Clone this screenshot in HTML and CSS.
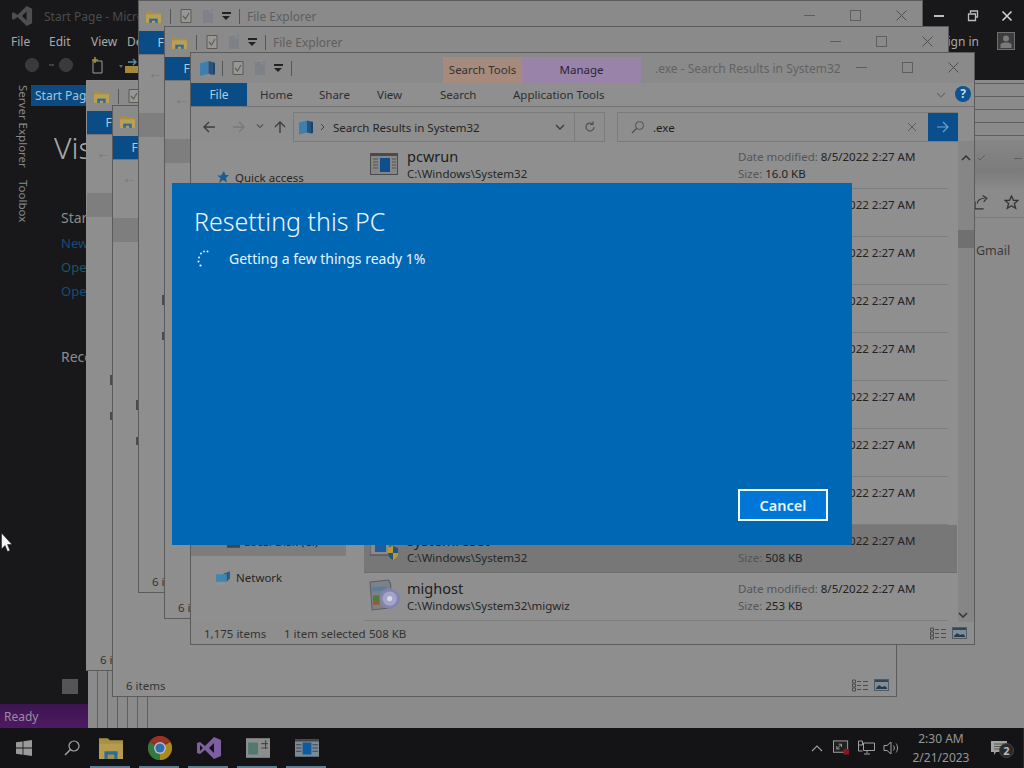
FILE: index.html
```html
<!DOCTYPE html>
<html lang="en">
<head>
<meta charset="utf-8">
<title>Resetting this PC</title>
<link rel="stylesheet" href="styles.css">
</head>
<body>
<svg class="defs" aria-hidden="true">
  <symbol id="i-folder" viewBox="0 0 16 16"><path d="M1 3h5l1 1.500h8V14H1z" fill="#a98f45"/><path d="M1 6h14v8H1z" fill="#b9a055"/><path d="M4 10h8v4H4z" fill="#2f6a99"/><path d="M6.500 12h3v2h-3z" fill="#b9a055"/></symbol>
  <symbol id="i-check" viewBox="0 0 16 16"><path d="M3 1.500h10v13H3z" fill="#979797" stroke="#5a5a5a"/><path d="M5 8l2.500 3L11 5" fill="none" stroke="#6b5a48" stroke-width="1.200"/></symbol>
  <symbol id="i-doc" viewBox="0 0 16 16"><path d="M3 1h10v14H3z" fill="#7e8288"/><path d="M3 1h7v3h3" fill="none" stroke="#8c9096"/></symbol>
  <symbol id="i-cube" viewBox="0 0 16 16"><path d="M1 3l8-2v12l-8 2z" fill="#3e7fb0"/><path d="M9 1l4 1v12l-4-1z" fill="#24537e"/><path d="M13 2l2 .5v11l-2 .5z" fill="#1a4368"/></symbol>
  <symbol id="i-app" viewBox="0 0 28 22"><rect x=".500" y=".500" width="27" height="21" fill="#868686" stroke="#4a4a4a"/><rect x="0" y="0" width="28" height="3" fill="#4a4a4a"/><rect x="10" y="5" width="10" height="14" fill="#0d4f8c"/><path d="M3 6h5M3 9h5M3 12h5M3 15h5M22 6h4M22 9h4M22 12h4M22 15h4" stroke="#555"/></symbol>
  <symbol id="i-views" viewBox="0 0 16 13"><path d="M.500 1h3v3h-3zM.500 5h3v3h-3zM.500 9h3v3h-3z" fill="none" stroke="#4c4c4c"/><path d="M5 2.500h4M11 2.500h5M5 6.500h4M11 6.500h5M5 10.500h4M11 10.500h5" stroke="#4c4c4c"/></symbol>
  <symbol id="i-pane" viewBox="0 0 15 12"><rect x=".500" y=".500" width="14" height="11" fill="#7f8e98" stroke="#4c5c68"/><rect x="1" y="1" width="13" height="2" fill="#345"/><path d="M2 9l3-3 3 2 3-1 2 2v1H2z" fill="#2a3a44"/></symbol>
</svg>

<main class="desktop">
  <section class="vs">
    <header class="vs-title">
      <svg class="vs-logo" viewBox="0 0 24 24"><path d="M17 1l6 3v16l-6 3L7 13l-4 3-2-1V9l2-1 4 3zM17 7l-5 5 5 5z" fill="#4e4e50" fill-rule="evenodd"/></svg>
      <span class="vs-name">Start Page - Microsoft Visual Studio</span>
      <span class="vs-controls">
        <svg viewBox="0 0 12 12"><path d="M1 6h10" stroke="#bdbdbd" stroke-width="2"/></svg>
        <svg viewBox="0 0 12 12"><path d="M3.500 3V1h7v6h-2M1.500 4h7v6.500h-7z" fill="none" stroke="#bdbdbd" stroke-width="1.300"/></svg>
        <svg viewBox="0 0 12 12"><path d="M1.500 1.500l9 9M10.500 1.500l-9 9" stroke="#d0d0d0" stroke-width="1.600"/></svg>
      </span>
    </header>
    <nav class="vs-menu">
      <span>File</span><span>Edit</span><span>View</span><span>Debug</span>
      <span class="vs-signin">Sign in</span>
      <svg class="vs-avatar" viewBox="0 0 18 18"><rect x=".500" y=".500" width="17" height="17" fill="#3c3c3c" stroke="#6e6e6e"/><circle cx="9" cy="6.500" r="3" fill="#7a7a7a"/><path d="M3.500 16v-4l3-1.500h5l3 1.500v4z" fill="#7a7a7a"/></svg>
    </nav>
    <div class="vs-tools">
      <svg class="vs-tool" viewBox="0 0 100 18">
        <circle cx="9" cy="9" r="6.500" fill="#3a3a3c" stroke="#3f3f40"/><path d="M26 9h5" stroke="#3f3f40" stroke-width="2"/><circle cx="43" cy="9" r="6.500" fill="#3a3a3c" stroke="#3f3f40"/>
        <path d="M70 5h9v12h-9z" fill="none" stroke="#9a9a9a"/><path d="M72 1v6M69 4h6" stroke="#a88f3c" stroke-width="1.500"/>
        <path d="M96 9h4l-2 3z" fill="#666"/>
      </svg>
      <svg class="vs-tool-two" viewBox="0 0 14 18"><path d="M0 10h14v7H0z" fill="#a5893a"/><path d="M3 6h8M8 3l3 3-3 3" fill="none" stroke="#5f8fa5" stroke-width="1.400"/></svg>
    </div>
    <div class="vs-body">
      <aside class="vs-rail">
        <span>Server Explorer</span>
        <span>Toolbox</span>
      </aside>
      <div class="vs-page">
        <div class="vs-tab">Start Page</div>
        <h1 class="vs-h1">Visual Studio</h1>
        <h2 class="vs-h2">Start</h2>
        <a class="vs-link">New Project...</a>
        <a class="vs-link vs-link-teal">Open Project...</a>
        <a class="vs-link">Open from Source Control...</a>
        <h2 class="vs-h2 vs-recent">Recent</h2>
      </div>
    </div>
    <span class="vs-square"></span>
    <footer class="vs-status">Ready</footer>
  </section>

  <section class="browser">
    <div class="stripes"></div>
    <div class="browser-side">
      <div class="browser-rules"><i></i><i></i><i></i><i></i><i></i></div>
      <div class="browser-head">
        <span class="browser-check">
          <svg viewBox="0 0 10 8"><path d="M1 4l2 2 5-5" fill="none" stroke="#5f5f5f"/></svg>
          <i></i>
        </span>
      </div>
      <div class="browser-actions">
        <svg viewBox="0 0 14 14"><path d="M1 6v7h8M3 8c0-3 3-5 7-5M8 .500l4 2.500-3 3.500" fill="none" stroke="#333" stroke-width="1.100"/></svg>
        <svg viewBox="0 0 14 14"><path d="M7 1l1.800 4H13L9.700 8l1.200 4.500L7 10l-3.900 2.500L4.300 8 1 5h4.200z" fill="none" stroke="#333" stroke-width="1.200"/></svg>
      </div>
      <div class="browser-gmail">Gmail</div>
    </div>
  </section>

  <article class="win win-1">
    <header class="win-title">
      <svg class="qa-main"><use href="#i-folder"/></svg><i class="qa-sep"></i>
      <svg class="qa-icon"><use href="#i-check"/></svg><svg class="qa-icon"><use href="#i-doc"/></svg>
      <span class="qa-more"></span><i class="qa-sep"></i>
      <span class="win-name">File Explorer</span>
    </header>
    <div class="win-tabs"><span class="tab-file">File</span></div>
    <div class="win-nav"><span class="nav-back">←</span></div>
    <div class="win-band"></div>
    <i class="tick tick-a"></i><i class="tick tick-b"></i>
    <footer class="win-status"><span>6 items</span></footer>
  </article>

  <article class="win win-2">
    <header class="win-title">
      <svg class="qa-main"><use href="#i-folder"/></svg><i class="qa-sep"></i>
      <svg class="qa-icon"><use href="#i-check"/></svg><svg class="qa-icon"><use href="#i-doc"/></svg>
      <span class="qa-more"></span><i class="qa-sep"></i>
      <span class="win-name">File Explorer</span>
    </header>
    <div class="win-tabs"><span class="tab-file">File</span></div>
    <div class="win-nav"><span class="nav-back">←</span></div>
    <div class="win-band"></div>
    <i class="tick tick-a"></i><i class="tick tick-b"></i>
    <footer class="win-status"><span>6 items</span><span class="view-btns"><svg class="view-a"><use href="#i-views"/></svg><svg class="view-b"><use href="#i-pane"/></svg></span></footer>
  </article>

  <article class="win win-3">
    <header class="win-title">
      <svg class="qa-main"><use href="#i-folder"/></svg><i class="qa-sep"></i>
      <svg class="qa-icon"><use href="#i-check"/></svg><svg class="qa-icon"><use href="#i-doc"/></svg>
      <span class="qa-more"></span><i class="qa-sep"></i>
      <span class="win-name">File Explorer</span>
      <span class="win-controls"><i class="ctl-min"></i><i class="ctl-max"></i><svg class="ctl-close" viewBox="0 0 11 11"><path d="M.500.500l10 10M10.500.500l-10 10" stroke="#4e4e4e"/></svg></span>
    </header>
    <div class="win-tabs"><span class="tab-file">File</span></div>
    <div class="win-nav"><span class="nav-back">←</span></div>
    <div class="win-band"></div>
    <i class="tick tick-a"></i><i class="tick tick-b"></i>
    <footer class="win-status"><span>6 items</span></footer>
  </article>

  <article class="win win-4">
    <header class="win-title">
      <svg class="qa-main"><use href="#i-folder"/></svg><i class="qa-sep"></i>
      <svg class="qa-icon"><use href="#i-check"/></svg><svg class="qa-icon"><use href="#i-doc"/></svg>
      <span class="qa-more"></span><i class="qa-sep"></i>
      <span class="win-name">File Explorer</span>
      <span class="win-controls"><i class="ctl-min"></i><i class="ctl-max"></i><svg class="ctl-close" viewBox="0 0 11 11"><path d="M.500.500l10 10M10.500.500l-10 10" stroke="#4e4e4e"/></svg></span>
    </header>
    <div class="win-tabs"><span class="tab-file">File</span></div>
    <div class="win-nav"><span class="nav-back">←</span></div>
    <div class="win-band"></div>
    <footer class="win-status"><span>6 items</span></footer>
  </article>

  <article class="win win-5">
    <header class="win-title win-title-search">
      <svg class="qa-main"><use href="#i-cube"/></svg><i class="qa-sep"></i>
      <svg class="qa-icon"><use href="#i-check"/></svg><svg class="qa-icon"><use href="#i-doc"/></svg>
      <span class="qa-more"></span><i class="qa-sep"></i>
      <span class="ctx ctx-search">Search Tools</span>
      <span class="ctx ctx-manage">Manage</span>
      <span class="win-name win-name-search">.exe - Search Results in System32</span>
      <span class="win-controls"><i class="ctl-min"></i><i class="ctl-max"></i><svg class="ctl-close" viewBox="0 0 11 11"><path d="M.500.500l10 10M10.500.500l-10 10" stroke="#4e4e4e"/></svg></span>
    </header>
    <div class="win-tabs win-tabs-search">
      <span class="tab-file">File</span>
      <span class="tab tab-home">Home</span>
      <span class="tab tab-share">Share</span>
      <span class="tab tab-view">View</span>
      <span class="tab tab-search">Search</span>
      <span class="tab tab-apps">Application Tools</span>
      <svg class="ribbon-chev" viewBox="0 0 10 6"><path d="M1 1l4 4 4-4" fill="none" stroke="#6c6c6c" stroke-width="1.200"/></svg>
      <span class="help">?</span>
    </div>
    <div class="win-nav win-nav-search">
      <svg class="nav-arrow" viewBox="0 0 14 14"><path d="M13 7H2M7 2L2 7l5 5" fill="none" stroke="#3d3d3d" stroke-width="1.400"/></svg>
      <svg class="nav-arrow nav-forward" viewBox="0 0 14 14"><path d="M1 7h11M7 2l5 5-5 5" fill="none" stroke="#747474" stroke-width="1.400"/></svg>
      <svg class="nav-drop" viewBox="0 0 8 5"><path d="M1 .500l3 3 3-3" fill="none" stroke="#555" stroke-width="1.200"/></svg>
      <svg class="nav-arrow nav-up" viewBox="0 0 14 14"><path d="M7 13V2M2 7l5-5 5 5" fill="none" stroke="#3d3d3d" stroke-width="1.400"/></svg>
      <div class="addr">
        <svg class="addr-icon"><use href="#i-cube"/></svg>
        <svg class="addr-sep" viewBox="0 0 5 8"><path d="M1 1l3 3-3 3" fill="none" stroke="#444"/></svg>
        <span class="addr-text">Search Results in System32</span>
        <svg class="addr-drop" viewBox="0 0 10 6"><path d="M1 1l4 4 4-4" fill="none" stroke="#3c3c3c" stroke-width="1.400"/></svg>
        <span class="addr-refresh"><svg viewBox="0 0 12 12"><path d="M10 6a4 4 0 1 1-1.500-3.100M9 .500V3.500H6" fill="none" stroke="#505050" stroke-width="1.200"/></svg></span>
      </div>
      <div class="find">
        <svg class="find-icon" viewBox="0 0 14 14"><circle cx="8.500" cy="5.500" r="4" fill="none" stroke="#4e4e4e"/><path d="M5.500 8.500L1 13" stroke="#4e4e4e" stroke-width="1.200"/></svg>
        <span class="find-text">.exe</span>
        <svg class="find-clear" viewBox="0 0 10 10"><path d="M1 1l8 8M9 1L1 9" stroke="#5e5e5e"/></svg>
        <span class="find-go"><svg viewBox="0 0 14 14"><path d="M1 7h11M7 2l5 5-5 5" fill="none" stroke="#6ca3cf" stroke-width="1.200"/></svg></span>
      </div>
    </div>
    <div class="win-body">
      <aside class="pane">
        <div class="pane-item pane-quick">
          <svg class="pane-icon" viewBox="0 0 14 14"><path d="M8 1l1.500 4H13l-3 3 1 4.500L7 10l-4 3 1.500-5L1 5.500h4z" fill="#1d5c8e"/></svg>
          <span>Quick access</span>
        </div>
        <div class="pane-item pane-disk">
          <svg class="pane-disk-icon" viewBox="0 0 14 6"><path d="M0 0h14v6H0z" fill="#444"/><path d="M1 1h5v1.500H1z" fill="#3c7a3c"/></svg>
          <span>Local Disk (C:)</span>
        </div>
        <div class="pane-item pane-net">
          <svg class="pane-icon-net" viewBox="0 0 16 16"><path d="M1 5h10v7H1z" fill="#3e87b3"/><path d="M7 5l7-3v7l-3 3V5z" fill="#215e8a"/><path d="M3 14h6" stroke="#8d9ba6"/></svg>
          <span>Network</span>
        </div>
      </aside>
      <div class="results">
        <div class="row">
          <svg class="row-app"><use href="#i-app"/></svg>
          <div class="row-main"><b>pcwrun</b><span>C:\Windows\System32</span></div>
          <div class="row-meta"><p><em>Date modified:</em> 8/5/2022 2:27 AM</p><p><em>Size:</em> 16.0 KB</p></div>
        </div>
        <div class="row"><div class="row-meta row-meta-solo"><p><em>Date modified:</em> 8/5/2022 2:27 AM</p></div></div>
        <div class="row"><div class="row-meta row-meta-solo"><p><em>Date modified:</em> 8/5/2022 2:27 AM</p></div></div>
        <div class="row"><div class="row-meta row-meta-solo"><p><em>Date modified:</em> 8/5/2022 2:27 AM</p></div></div>
        <div class="row"><div class="row-meta row-meta-solo"><p><em>Date modified:</em> 8/5/2022 2:27 AM</p></div></div>
        <div class="row"><div class="row-meta row-meta-solo"><p><em>Date modified:</em> 8/5/2022 2:27 AM</p></div></div>
        <div class="row"><div class="row-meta row-meta-solo"><p><em>Date modified:</em> 8/5/2022 2:27 AM</p></div></div>
        <div class="row"><div class="row-meta row-meta-solo"><p><em>Date modified:</em> 8/5/2022 2:27 AM</p></div></div>
        <div class="row row-selected">
          <svg class="row-shield" viewBox="0 0 30 22"><path d="M0 0h20v16H0z" fill="#8a8a8a" stroke="#4a4a4a"/><path d="M5 3h11v10H5z" fill="#1c5f9b"/><path d="M18 9l5-2 5 2v6c0 3-3 5-5 6-2-1-5-3-5-6z" fill="#b69a32"/><path d="M23 7l5 2v5h-5zM18 14h5v7c-2-1-5-3-5-7z" fill="#27527f"/></svg>
          <div class="row-main"><b>systemreset</b><span>C:\Windows\System32</span></div>
          <div class="row-meta"><p><em>Date modified:</em> 8/5/2022 2:27 AM</p><p><em>Size:</em> 508 KB</p></div>
        </div>
        <div class="row">
          <svg class="row-cd" viewBox="0 0 32 32"><path d="M2 3l18-2 2 4v23L4 30z" fill="#7c8288" stroke="#5a5e62"/><path d="M4 8l14-1v4l-14 1z" fill="#5c7d9a"/><path d="M5 16h7v6H5z" fill="#4f7a3a"/><path d="M5 22h6v3H5z" fill="#9a5a2e"/><circle cx="21" cy="19" r="10" fill="#8284ad"/><circle cx="21" cy="19" r="7" fill="#a3a5c6"/><circle cx="21" cy="19" r="2.500" fill="#d8d8e4"/></svg>
          <div class="row-main"><b>mighost</b><span>C:\Windows\System32\migwiz</span></div>
          <div class="row-meta"><p><em>Date modified:</em> 8/5/2022 2:27 AM</p><p><em>Size:</em> 253 KB</p></div>
        </div>
      </div>
      <div class="scroll">
        <svg viewBox="0 0 10 6"><path d="M1 5l4-4 4 4" fill="none" stroke="#333" stroke-width="1.500"/></svg>
        <span class="scroll-thumb"></span>
        <svg class="scroll-down" viewBox="0 0 10 6"><path d="M1 1l4 4 4-4" fill="none" stroke="#333" stroke-width="1.500"/></svg>
      </div>
    </div>
    <footer class="win-status win-status-search">
      <span class="st-count">1,175 items</span><span class="st-sel">1 item selected</span><span class="st-size">508 KB</span>
      <span class="view-btns"><svg class="view-a"><use href="#i-views"/></svg><svg class="view-b"><use href="#i-pane"/></svg></span>
    </footer>
  </article>

  <section class="reset" role="dialog">
    <h1 class="reset-title">Resetting this PC</h1>
    <div class="reset-progress">
      <svg class="spinner" viewBox="0 0 14 18"><g fill="#e3f3ff"><circle cx="10.500" cy="1.500" r="1"/><circle cx="7" cy="1.500" r=".9"/><circle cx="4" cy="3.500" r="1"/><circle cx="2" cy="7.500" r="1"/><circle cx="1.500" cy="11.500" r="1"/><circle cx="3.500" cy="15.500" r="1.100"/></g></svg>
      <span>Getting a few things ready 1%</span>
    </div>
    <button class="reset-cancel" type="button">Cancel</button>
  </section>

  <svg class="cursor" viewBox="0 0 12 19"><path d="M.500 0v16l3.500-3.500 2.500 6 2.500-1-2.500-6H11z" fill="#f4f4f4" stroke="#111" stroke-width=".5"/></svg>
</main>

<footer class="taskbar">
  <svg class="start" viewBox="0 0 16 16"><path d="M0 2.300l6.600-.9v6.200H0zM7.400 1.300L16 0v7.600H7.400zM0 8.400h6.600v6.300L0 13.700zM7.400 8.400H16V16l-8.600-1.200z" fill="#9a9a9a"/></svg>
  <svg class="find-task" viewBox="0 0 16 16"><circle cx="10" cy="6" r="5" fill="none" stroke="#a5a5a5" stroke-width="1.200"/><path d="M6.500 9.500L1 15" stroke="#a5a5a5" stroke-width="1.400"/></svg>
  <div class="apps">
    <span class="app"><svg viewBox="0 0 22 20"><path d="M0 1h8l2 2h12v17H0z" fill="#a8903f"/><path d="M0 6h22v14H0z" fill="#b59c4f"/><path d="M5 13h12v7H5z" fill="#2c6b9b"/><path d="M8 16h6v4H8z" fill="#a8903f"/></svg></span>
    <span class="app"><svg viewBox="0 0 24 24"><circle cx="12" cy="12" r="12" fill="#8b2e25"/><path d="M12 12L22.400 6A12 12 0 0 1 12 24z" fill="#a88a1e"/><path d="M12 12L12 24A12 12 0 0 1 1.600 6z" fill="#2f7a3c"/><path d="M1.600 6A12 12 0 0 1 22.400 6H12z" fill="#9c3227"/><circle cx="12" cy="12" r="6" fill="#bcbcbc"/><circle cx="12" cy="12" r="4.500" fill="#2f6db5"/></svg></span>
    <span class="app"><svg viewBox="0 0 24 24"><path d="M17 1l7 3v16l-7 3L8 14l-5 4-3-1V7l3-1 5 4zM17 7l-5 5 5 5zM3 9v6l3-3z" fill="#7e5f9f" fill-rule="evenodd"/></svg></span>
    <span class="app"><svg viewBox="0 0 22 18"><rect width="22" height="18" fill="#8d8d8d"/><rect x="2" y="4" width="9" height="11" fill="#4e7a70"/><path d="M14 5h6M14 9h6M18 2v8" stroke="#444"/></svg></span>
    <span class="app"><svg viewBox="0 0 22 16"><rect width="22" height="16" fill="#7c8a94"/><rect y="0" width="22" height="2" fill="#444"/><rect x="7" y="3" width="8" height="11" fill="#0d5aa0"/><path d="M1 5h5M1 8h5M1 11h5M16 5h5M16 8h5M16 11h5" stroke="#445"/></svg></span>
  </div>
  <div class="tray">
    <svg class="tray-chev" viewBox="0 0 12 7"><path d="M1 6l5-5 5 5" fill="none" stroke="#a0a0a0" stroke-width="1.100"/></svg>
    <svg class="tray-icon" viewBox="0 0 18 16"><rect x=".500" y=".500" width="15" height="12" fill="#222" stroke="#a5a5a5"/><path d="M4 9l5-5M6 4h3v3M4 6v3h3" fill="none" stroke="#999"/><rect x="11" y="9" width="6" height="6" fill="#8c1520"/></svg>
    <svg class="tray-icon" viewBox="0 0 17 15"><path d="M5.500 2.500h11V10h-11zM.500.500h4v4h-4zM.500 4.500v6h4M9 10v3M6 13.500h6" fill="none" stroke="#a0a0a0"/></svg>
    <svg class="tray-icon tray-sound" viewBox="0 0 16 14"><path d="M1 4.500h3L8 1v12L4 9.500H1zM10.500 4.500c1 1.500 1 3.500 0 5M13 2.500c2 2.500 2 6.500 0 9" fill="none" stroke="#a0a0a0"/></svg>
    <div class="clock"><span>2:30 AM</span><span>2/21/2023</span></div>
    <span class="notify">
      <svg viewBox="0 0 16 14"><path d="M0 0h16v11H5l-2 3v-3H0z" fill="#a3a3a3"/><path d="M3 3h10M3 5.500h10M3 8h7" stroke="#555"/></svg>
      <b>2</b>
    </span>
  </div>
</footer>
</body>
</html>
```
FILE: styles.css
```css
* { box-sizing: border-box; }
html, body { margin: 0; padding: 0; }
body {
  width: 1024px;
  height: 768px;
  overflow: hidden;
  background: #141416;
  font-family: "Noto Sans", "Open Sans", "Liberation Sans", sans-serif;
  font-size: 12px;
  color: #1e1e1e;
}
svg { display: block; }
i, em { font-style: normal; }
.defs { position: absolute; width: 0; height: 0; }

.desktop { position: relative; width: 1024px; height: 728px; overflow: hidden; background: #1a1a1c; }

/* Visual Studio */
.vs { position: absolute; inset: 0; display: flex; flex-direction: column; background: #18181a; color: #a9a9a9; }
.vs-title { display: flex; align-items: center; height: 32px; padding-left: 11px; flex: none; }
.vs-logo { width: 22px; height: 22px; }
.vs-name { margin-left: 11px; color: #4b4b4e; font-size: 12px; }
.vs-controls { margin-left: auto; display: flex; gap: 22px; padding-right: 11px; }
.vs-controls svg { width: 12px; height: 12px; }
.vs-menu { display: flex; height: 18px; padding-left: 11px; align-items: center; font-size: 12px; flex: none; }
.vs-menu span:nth-child(1) { width: 38px; }
.vs-menu span:nth-child(2) { width: 42px; }
.vs-menu span:nth-child(3) { width: 36px; }
.vs-signin { margin-left: auto; margin-right: 18px; }
.vs-avatar { width: 18px; height: 18px; margin-right: 9px; }
.vs-tools { display: flex; height: 30px; padding: 6px 0 0 23px; gap: 2px; flex: none; }
.vs-tool { width: 100px; height: 18px; }
.vs-tool-two { width: 14px; height: 18px; }
.vs-body { display: flex; flex: 1; }
.vs-rail { width: 31px; display: flex; flex-direction: column; gap: 12px; padding: 5px 0 0 10px; }
.vs-rail span { writing-mode: vertical-rl; font-size: 11.500px; color: #8a8a8a; }
.vs-page { flex: 1; white-space: nowrap; }
.vs-tab { width: 70px; height: 21px; margin-top: 5px; padding-left: 4px; background: #0c4a80; color: #a3c4dc; font-size: 12px; line-height: 21px; }
.vs-h1 { margin: 22px 0 0 23px; font-size: 30px; font-weight: 300; line-height: 40px; color: #a8a8a8; }
.vs-h2 { margin: 39px 0 0 30px; font-size: 14px; font-weight: 400; line-height: 22px; color: #8c8c8c; }
.vs-link { display: block; margin: 7px 0 0 30px; font-size: 13px; line-height: 17px; color: #154d78; }
.vs-h2 + .vs-link { margin-top: 6px; }
.vs-link-teal { color: #155a66; }
.vs-recent { margin-top: 46px; }
.vs-square { position: absolute; left: 62px; top: 679px; width: 16px; height: 15px; background: #555; }
.vs-status { height: 24px; padding-left: 4px; background: linear-gradient(#3c1550, #4e1a62); color: #9b8aa6; font-size: 12px; line-height: 26px; flex: none; }

/* Browser behind the explorer windows */
.browser { position: absolute; left: 88px; top: 80px; right: 0; bottom: 0; display: flex; background: #8b8b8b; }
.stripes { align-self: flex-end; width: 60px; height: 58px; background: repeating-linear-gradient(90deg, #8b8b8b 0 9px, #5f5f5f 9px 10px); }
.browser-side { margin-left: auto; width: 50px; }
.browser-rules { height: 60px; padding-top: 3px; }
.browser-rules i { display: block; height: 1px; margin-bottom: 12px; background: #5e5e5e; }
.browser-head { height: 50px; padding-top: 14px; background: linear-gradient(#868686, #7c7c7c 60%, #8a8a8a); }
.browser-check { display: flex; align-items: center; }
.browser-check svg { width: 10px; height: 8px; margin-left: 3px; }
.browser-check i { width: 8px; height: 1px; margin-left: 27px; background: #5e5e5e; }
.browser-actions { display: flex; gap: 15px; height: 28px; padding: 5px 0 0 0; border-bottom: 1px solid #7a7a7a; }
.browser-actions svg { width: 15px; height: 15px; }
.browser-gmail { margin-top: 24px; padding-left: 2px; font-size: 12.500px; color: #3c3c3c; }

/* File Explorer windows */
.win { position: absolute; display: flex; flex-direction: column; overflow: hidden; background: #8e8e8e; border: 1px solid #5b5b5b; }
.win-1 { left: 86px; top: 80px; width: 300px; height: 591px; border-left-color: #8e8e8e; border-top-color: #8e8e8e; }
.win-2 { left: 112px; top: 105px; width: 785px; height: 592px; }
.win-3 { left: 138px; top: 0; width: 785px; height: 593px; }
.win-4 { left: 164px; top: 26px; width: 785px; height: 593px; }
.win-5 { left: 190px; top: 52px; width: 785px; height: 593px; }

.win-title { display: flex; align-items: center; height: 30px; padding-left: 6px; flex: none; position: relative; background: #8a8a8a; }
.qa-main { width: 17px; height: 17px; }
.qa-sep { width: 1px; height: 15px; margin: 0 7px 0 8px; background: #555; }
.qa-icon { width: 16px; height: 16px; margin-right: 6px; }
.qa-more { width: 9px; height: 8px; margin-left: 0; border-top: 2px solid #222; background: linear-gradient(#222, #222) center 3px / 0 0 no-repeat; position: relative; }
.qa-more::after { content: ""; position: absolute; left: 0; top: 2px; border: 4.500px solid transparent; border-top: 4px solid #222; border-bottom: 0; }
.win-name { font-size: 12px; color: #5e5e5e; }
.win-controls { position: absolute; right: 15px; top: 9px; display: flex; align-items: center; gap: 35px; }
.ctl-min { width: 11px; height: 1px; background: #5e5e5e; }
.ctl-max { width: 11px; height: 11px; border: 1px solid #5e5e5e; }
.ctl-close { width: 11px; height: 11px; }

.win-tabs { display: flex; height: 24px; flex: none; position: relative; border-bottom: 1px solid #737373; background: #8f8f8f; }
.tab-file { width: 56px; height: 23px; background: #0a4d86; color: #b5cbdd; text-align: center; line-height: 23px; font-size: 12px; }
.win-nav { height: 34px; flex: none; padding: 8px 0 0 9px; }
.nav-back { color: #777; font-size: 15px; line-height: 18px; display: block; }
.win-band { height: 24px; margin-top: 24px; background: #7e7e7e; flex: none; }
.tick { position: absolute; left: 23px; width: 2px; height: 10px; background: #4a4a50; }
.tick-a { top: 294px; }
.tick-b { top: 331px; height: 8px; }
.win-status { margin-top: auto; display: flex; align-items: center; height: 22px; padding-left: 13px; font-size: 11.500px; color: #333; flex: none; }
.view-btns { margin-left: auto; display: flex; align-items: center; gap: 6px; padding-right: 7px; }
.view-a { width: 16px; height: 13px; }
.view-b { width: 15px; height: 12px; }

/* Search window */
.win-title-search .qa-main { margin-left: 2px; margin-right: -2px; }
.ctx { align-self: flex-end; height: 26px; text-align: center; font-size: 11.500px; line-height: 26px; color: #333; }
.ctx-search { margin-left: 144px; width: 79px; background: #a68a7c; }
.ctx-manage { width: 119px; background: #9a83a8; color: #2c2238; }
.win-name-search { margin-left: 14px; color: #626262; }
.win-tabs-search { color: #2e2e2e; }
.tab { position: absolute; top: 0; height: 23px; line-height: 23px; font-size: 11.500px; }
.tab-home { left: 69px; }
.tab-share { left: 128px; }
.tab-view { left: 186px; }
.tab-search { left: 249px; }
.tab-apps { left: 322px; }
.ribbon-chev { position: absolute; left: 745px; top: 9px; width: 10px; height: 6px; }
.help { position: absolute; left: 764px; top: 3px; width: 16px; height: 16px; border-radius: 50%; background: #0e5391; color: #c6d5e2; font-size: 12px; font-weight: 700; line-height: 16px; text-align: center; }

.win-nav-search { position: relative; display: flex; align-items: flex-start; padding: 5px 0 0 0; }
.nav-arrow { width: 14px; height: 14px; margin-top: 8px; margin-left: 11px; }
.nav-forward { margin-left: 16px; opacity: .8; }
.nav-drop { width: 8px; height: 5px; margin: 12px 0 0 10px; }
.nav-up { margin-left: 9px; }
.addr { display: flex; align-items: center; width: 312px; height: 30px; margin-left: 6px; border: 1px solid #7b7b7b; position: relative; }
.addr-icon { width: 16px; height: 17px; margin-left: 4px; }
.addr-sep { width: 5px; height: 8px; margin-left: 6px; }
.addr-text { margin-left: 8px; font-size: 11.500px; color: #242424; }
.addr-drop { width: 10px; height: 6px; margin-left: auto; margin-right: 9px; }
.addr-refresh { display: flex; align-items: center; justify-content: center; width: 30px; height: 28px; border-left: 1px solid #7b7b7b; }
.addr-refresh svg { width: 12px; height: 12px; }
.find { display: flex; align-items: center; width: 341px; height: 30px; margin-left: 12px; border: 1px solid #7b7b7b; border-right: 0; }
.find-icon { width: 14px; height: 14px; margin-left: 13px; }
.find-text { margin-left: 8px; font-size: 11.500px; color: #1e1e1e; }
.find-clear { width: 10px; height: 10px; margin-left: auto; margin-right: 11px; }
.find-go { display: flex; align-items: center; justify-content: center; width: 30px; height: 28px; background: #0a4f8c; }
.find-go svg { width: 14px; height: 14px; }

.win-body { display: flex; flex: 1; min-height: 0; background: #8f8f8f; }
.pane { width: 173px; flex: none; padding-top: 25px; position: relative; }
.pane-item { display: flex; align-items: center; height: 22px; font-size: 11.500px; color: #262626; white-space: nowrap; }
.pane-quick { padding-left: 25px; gap: 5px; }
.pane-icon { width: 14px; height: 14px; }
.pane-disk { height: 27px; margin-top: 341px; width: 155px; padding-left: 36px; gap: 4px; background: #7d7d7d; align-items: flex-start; }
.pane-disk span { line-height: 26px; }
.pane-disk-icon { width: 13px; height: 6px; margin-top: 13px; }
.pane-net { margin-top: 10px; padding-left: 24px; gap: 4px; }
.pane-icon-net { width: 17px; height: 17px; }
.results { width: 594px; flex: none; }
.row { position: relative; display: flex; align-items: center; height: 48px; padding-left: 43px; margin-right: 10px; border-bottom: 1px solid #7d7d7d; }
.row-selected { margin-right: 1px; background: #777; border-bottom-color: #6d6d6d; }
.row-app { position: absolute; left: 6px; top: 12px; width: 28px; height: 22px; }
.row-shield { position: absolute; left: 6px; top: 14px; width: 30px; height: 22px; }
.row-cd { position: absolute; left: 4px; top: 6px; width: 33px; height: 33px; }
.row-main { display: flex; flex-direction: column; width: 331px; flex: none; white-space: nowrap; }
.row-main b { font-weight: 400; font-size: 14.500px; line-height: 19px; color: #202020; }
.row-main span { margin-top: 0; font-size: 11.500px; line-height: 16px; color: #262626; }
.row-meta { font-size: 11.500px; line-height: 17px; color: #222; white-space: nowrap; }
.row-meta p { margin: 0; }
.row-meta em { color: #555; }
.row-meta-solo { margin-left: 331px; margin-top: -16px; }
.scroll { width: 16px; flex: none; position: relative; background: #868686; margin-left: 0; }
.scroll svg { width: 10px; height: 6px; margin: 14px 0 0 3px; }
.scroll-thumb { position: absolute; left: 0; top: 89px; width: 16px; height: 18px; background: #707070; }
.scroll svg.scroll-down { position: absolute; bottom: 4px; margin: 0; }
.win-status-search { margin-top: 0; }
.st-count { width: 80px; }
.st-sel { width: 85px; }

/* Reset dialog */
.reset { position: absolute; left: 172px; top: 183px; width: 680px; height: 362px; display: flex; flex-direction: column; padding: 19px 24px 24px 22px; background: #0067b5; color: #e6f4ff; }
.reset-title { margin: 0; font-size: 25px; font-weight: 300; line-height: 38px; color: #e9f6ff; }
.reset-progress { display: flex; align-items: center; margin-top: 7px; font-size: 14px; line-height: 24px; }
.spinner { width: 14px; height: 18px; margin-left: 3px; margin-right: 18px; }
.reset-cancel { align-self: flex-end; margin-top: auto; width: 90px; height: 32px; border: 2px solid #f2faff; background: #0077d6; color: #e8f5ff; font: 600 14.500px "Noto Sans", "Open Sans", sans-serif; }
.cursor { position: absolute; left: 1px; top: 533px; width: 12px; height: 19px; }

/* Taskbar */
.taskbar { position: relative; display: flex; align-items: center; height: 40px; background: #141416; }
.start { width: 16px; height: 16px; margin-left: 16px; }
.find-task { width: 16px; height: 16px; margin-left: 32px; }
.apps { display: flex; margin-left: 6px; height: 40px; }
.app { position: relative; display: flex; align-items: center; justify-content: center; width: 49px; }
.app svg { width: 24px; height: 24px; }
.app::after { content: ""; position: absolute; left: 4px; right: 5px; bottom: 0; height: 2px; background: #5d7e90; }
.tray { margin-left: auto; display: flex; align-items: center; padding-right: 5px; height: 40px; border-right: 1px solid #2c2c2e; }
.tray-chev { width: 12px; height: 7px; margin-right: 10px; }
.tray-icon { width: 17px; height: 16px; margin-right: 8px; }
.tray-sound { width: 16px; height: 14px; }
.clock { display: flex; flex-direction: column; align-items: center; width: 62px; margin-left: 3px; font-size: 12px; line-height: 19px; color: #979797; }
.notify { position: relative; width: 22px; margin-left: 19px; margin-right: 5px; }
.notify svg { width: 16px; height: 14px; }
.notify b { position: absolute; left: 8px; top: 2px; width: 15px; height: 15px; border: 1px solid #444; border-radius: 50%; background: #2a2a2a; color: #bbb; font-size: 11px; line-height: 13px; text-align: center; }
```
